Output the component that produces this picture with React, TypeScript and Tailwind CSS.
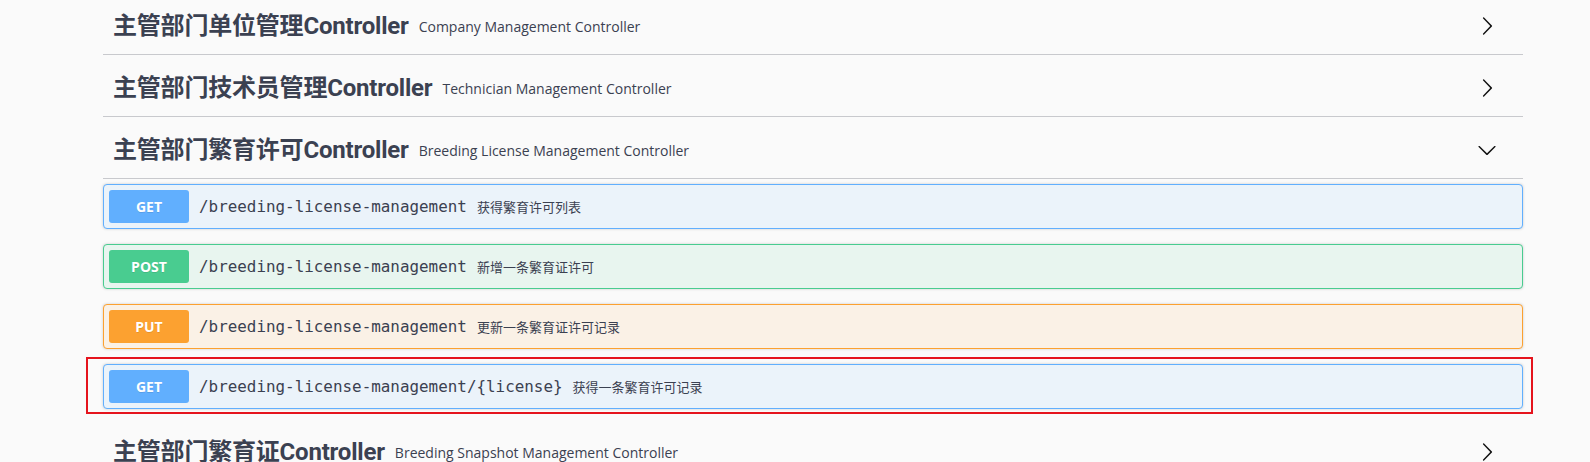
import type { ReactNode } from 'react';

type Method = 'GET' | 'POST' | 'PUT';

interface Operation {
  method: Method;
  path: string;
  summary: string;
  marked?: boolean;
}

const methodStyles: Record<Method, { block: string; badge: string }> = {
  GET: { block: 'bg-[#ebf3fa] border-[#61affe]', badge: 'bg-[#61affe]' },
  POST: { block: 'bg-[#e8f5ef] border-[#49cc90]', badge: 'bg-[#49cc90]' },
  PUT: { block: 'bg-[#faf1e6] border-[#fca130]', badge: 'bg-[#fca130]' },
};

const operations: Operation[] = [
  { method: 'GET', path: '/breeding-license-management', summary: '获得繁育许可列表' },
  { method: 'POST', path: '/breeding-license-management', summary: '新增一条繁育证许可' },
  { method: 'PUT', path: '/breeding-license-management', summary: '更新一条繁育证许可记录' },
  {
    method: 'GET',
    path: '/breeding-license-management/{license}',
    summary: '获得一条繁育许可记录',
    marked: true,
  },
];

function ArrowRight() {
  return (
    <svg width="20" height="20" viewBox="0 0 20 20" className="fill-[#111]">
      <path d="M13.25 10L6.109 2.58a.697.697 0 0 1 0-.979.68.68 0 0 1 .969 0l7.83 7.908a.697.697 0 0 1 0 .979l-7.83 7.908a.68.68 0 0 1-.969 0 .697.697 0 0 1 0-.979L13.25 10z" />
    </svg>
  );
}

function ArrowDown() {
  return (
    <svg width="20" height="20" viewBox="0 0 20 20" className="fill-[#111]">
      <path d="M17.418 6.109c.272-.268.709-.268.979 0s.271.701 0 .969l-7.908 7.83c-.268.268-.701.268-.969 0l-7.908-7.83c-.27-.268-.27-.701 0-.969.271-.268.709-.268.979 0L10 13.25l7.418-7.141z" />
    </svg>
  );
}

function TagHeading({ name, desc, open }: { name: string; desc: string; open?: boolean }) {
  return (
    <div className="flex h-[57px] items-center border-b border-[#c8c9cd] pl-[10px] pr-[26px] mb-[5px]">
      <span className="font-['Roboto','Noto_Sans_CJK_SC',sans-serif] text-[24px] leading-[36px] font-bold tracking-[-0.2px] text-[#3b4151]">
        {name}
      </span>
      <span className="px-[10px] font-['Open_Sans',sans-serif] text-[14px] text-[#3b4151]">
        {desc}
      </span>
      <div className="ml-auto flex items-center">{open ? <ArrowDown /> : <ArrowRight />}</div>
    </div>
  );
}

function OpBlock({ op }: { op: Operation }) {
  const s = methodStyles[op.method];
  return (
    <div
      className={`flex items-center rounded-[4px] border p-[5px] shadow-[0_0_3px_rgba(0,0,0,0.19)] ${s.block}`}
    >
      <span
        className={`flex h-[33px] w-[80px] items-center justify-center rounded-[3px] font-['Open_Sans',sans-serif] text-[14px] font-bold text-white [text-shadow:0_1px_0_rgba(0,0,0,0.1)] ${s.badge}`}
      >
        {op.method}
      </span>
      <span className="px-[10px] font-['DejaVu_Sans_Mono',monospace] text-[15.9px] text-[#3b4151]">
        {op.path}
      </span>
      <span className="font-['Noto_Sans_CJK_SC',sans-serif] text-[13px] text-[#3b4151]">
        {op.summary}
      </span>
    </div>
  );
}

function Marked({ children }: { children: ReactNode }) {
  return (
    <div className="relative">
      <div className="pointer-events-none absolute -left-[17px] -right-[10px] -top-[7px] -bottom-[5px] border-2 border-[#e5141d]" />
      {children}
    </div>
  );
}

export default function App() {
  return (
    <div className="h-[462px] w-full overflow-hidden bg-[#fafafa]">
      <div className="ml-[103px] mt-[-2px] w-[1420px]">
        <TagHeading name="主管部门单位管理Controller" desc="Company Management Controller" />
        <TagHeading name="主管部门技术员管理Controller" desc="Technician Management Controller" />
        <TagHeading name="主管部门繁育许可Controller" desc="Breeding License Management Controller" open />
        <div className="flex flex-col gap-[15px]">
          {operations.map((op, i) =>
            op.marked ? (
              <Marked key={i}>
                <OpBlock op={op} />
              </Marked>
            ) : (
              <OpBlock key={i} op={op} />
            )
          )}
        </div>
        <div className="mt-[15px]">
          <TagHeading name="主管部门繁育证Controller" desc="Breeding Snapshot Management Controller" />
        </div>
      </div>
    </div>
  );
}
